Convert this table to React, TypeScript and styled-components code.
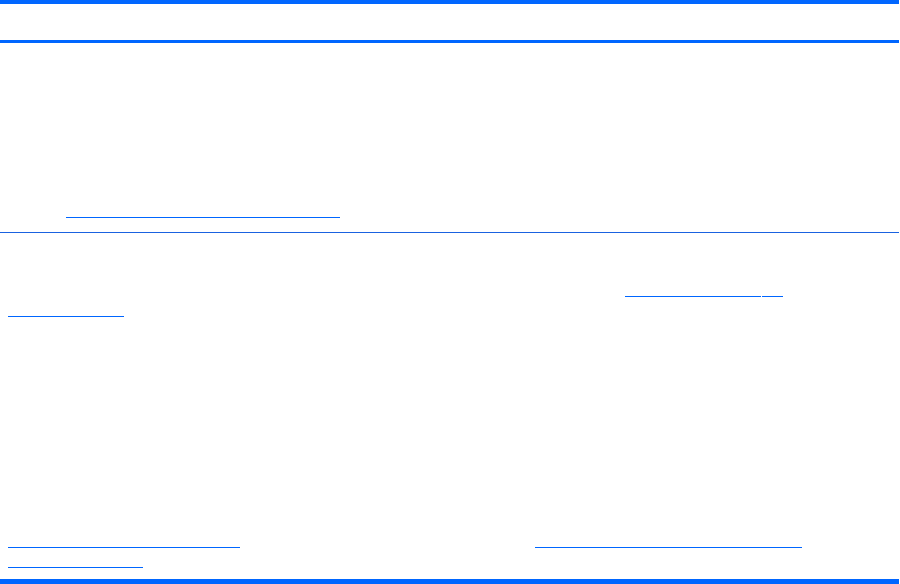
import styled, { createGlobalStyle } from 'styled-components';

const GlobalStyle = createGlobalStyle`
    html, body {
        margin: 0;
        padding: 0;
        background: #ffffff;
        font-family: 'Liberation Sans', Arial, sans-serif;
    }
`

const Page = styled.div`
    width: 899px;
    height: 584px;
    display: flex;
    flex-direction: column;
    overflow: hidden;
`

const Header = styled.header`
    height: 36px;
    border-top: 4px solid #0066ff;
    border-bottom: 3px solid #0066ff;
    flex-shrink: 0;
`

const TopSection = styled.section`
    height: 190px;
    display: flex;
    flex-direction: column;
    justify-content: flex-end;
    padding-bottom: 11px;
    box-sizing: border-box;
    border-bottom: 1px solid #1a62e0;
    width: 900px;
    flex-shrink: 0;
`

const Body = styled.section`
    flex: 1;
    display: flex;
    flex-direction: column;
    padding-top: 47px;
`

const Para = styled.div<{ $gapAfter?: number }>`
    display: flex;
    flex-direction: column;
    margin-bottom: ${p => p.$gapAfter ?? 0}px;
`

const Line = styled.div<{ $indent?: number }>`
    height: 20px;
    display: flex;
    align-items: flex-end;
    padding: 0 0 3px ${p => p.$indent ?? 8}px;
    box-sizing: border-box;
`

const Link = styled.a<{ $width: number; $offset?: number }>`
    display: block;
    width: ${p => p.$width}px;
    margin-left: ${p => p.$offset ?? 0}px;
    height: 0;
    border-bottom: 1px solid #0066ff;
    color: #0066ff;
    font-size: 13px;
`

const Footer = styled.footer`
    height: 5px;
    background: #0066ff;
    margin-top: auto;
    flex-shrink: 0;
`

export default function App() {
    return (
        <>
            <GlobalStyle />
            <Page>
                <Header />
                <TopSection>
                    <Line $indent={66}>
                        <Link href="#" $width={274} />
                    </Line>
                </TopSection>
                <Body>
                    <Para $gapAfter={211}>
                        <Line>
                            <Link href="#" $offset={617} $width={136} />
                            <Link href="#" $offset={1} $width={21} />
                        </Line>
                        <Line>
                            <Link href="#" $width={116} />
                        </Line>
                    </Para>
                    <Para>
                        <Line>
                            <Link href="#" $width={232} />
                            <Link href="#" $offset={295} $width={267} />
                        </Line>
                        <Line>
                            <Link href="#" $width={135} />
                        </Line>
                    </Para>
                    <Footer />
                </Body>
            </Page>
        </>
    )
}
